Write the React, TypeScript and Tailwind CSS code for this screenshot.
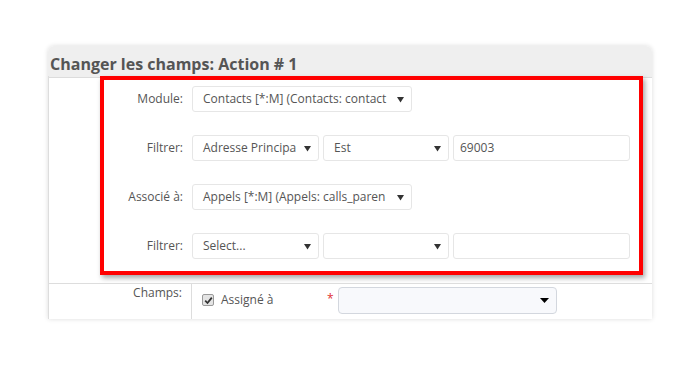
import React from "react";

const Caret = () => (
  <svg width="7" height="7" viewBox="0 0 7 7" className="shrink-0">
    <path d="M0 1 L7 1 L3.5 6.5 Z" fill="#333" />
  </svg>
);

function Sel({ w, text }: { w: string; text: string }) {
  return (
    <div className={`${w} h-[26px] border border-[#e6e6e6] rounded-[3px] bg-white flex items-center pl-[10px] pr-[7px]`}>
      <span className="whitespace-nowrap text-[12px] text-[#555]">{text}</span>
      <div className="flex-1" />
      <Caret />
    </div>
  );
}

function Label({ children }: { children: React.ReactNode }) {
  return (
    <div className="w-[79px] mr-[9px] text-right text-[12px] text-[#555] leading-[26px] shrink-0">{children}</div>
  );
}

export default function App() {
  return (
    <div className="w-[700px] h-[367px] bg-white pt-[46px] pl-[48px]" style={{ fontFamily: '"Open Sans", "Liberation Sans", sans-serif' }}>
      <div className="w-[604px] bg-white rounded-t-[6px] shadow-[0_0_5px_rgba(0,0,0,0.14)]">
        <div className="h-[32px] bg-[#efefef] rounded-t-[6px] border-b border-[#dcdcdc] pl-[2px] pt-[8px]">
          <div className="text-[16px] font-bold text-[#555] leading-[20px]">Changer les champs: Action # 1</div>
        </div>
        <div className="border-l border-[#dddddd]">
          <div className="ml-[51px] mr-[9px] -mt-[2px] border-[4px] border-[#ff0000] bg-white shadow-[2px_3px_5px_rgba(0,0,0,0.35)] pt-[6px] pb-[12px] flex flex-col gap-[23px]">
            <div className="flex items-center">
              <Label>Module:</Label>
              <Sel w="w-[220px]" text="Contacts [*:M] (Contacts: contact" />
            </div>
            <div className="flex items-center">
              <Label>Filtrer:</Label>
              <div className="flex gap-[4px]">
                <Sel w="w-[127px]" text="Adresse Principa" />
                <Sel w="w-[126px]" text="Est" />
                <div className="w-[177px] h-[26px] border border-[#e6e6e6] rounded-[3px] bg-white flex items-center pl-[6px] text-[12px] text-[#555]">69003</div>
              </div>
            </div>
            <div className="flex items-center">
              <Label>Associé à:</Label>
              <Sel w="w-[220px]" text="Appels [*:M] (Appels: calls_paren" />
            </div>
            <div className="flex items-center">
              <Label>Filtrer:</Label>
              <div className="flex gap-[4px]">
                <Sel w="w-[127px]" text="Select..." />
                <Sel w="w-[126px]" text="" />
                <div className="w-[177px] h-[26px] border border-[#e6e6e6] rounded-[3px] bg-white" />
              </div>
            </div>
          </div>
          <div className="mt-[8px] border-t border-[#dddddd] flex h-[36px]">
            <div className="w-[143px] border-r border-[#dddddd] text-right pr-[9px] text-[12px] text-[#555] leading-[16px] pt-[1px]">Champs:</div>
            <div className="flex items-start pt-[3px]">
              <div className="ml-[10px] mt-[7px] w-[12px] h-[12px] rounded-[2px] bg-[#e4e4e4] border border-[#9a9a9a] flex items-center justify-center">
                <svg width="9" height="9" viewBox="0 0 9 9"><path d="M1.2 4.6 L3.5 7 L7.8 1.6" stroke="#333" strokeWidth="1.8" fill="none" /></svg>
              </div>
              <div className="ml-[7px] mt-[4px] text-[12px] text-[#555] leading-[18px] w-[106px]">Assigné à</div>
              <div className="mt-[5px] text-[12px] text-[#e03030] leading-[14px] w-[11px]">*</div>
              <div className="w-[219px] h-[27px] border border-[#d3d7de] rounded-[4px] bg-[#f8f9fc] flex items-center justify-end pr-[7px]">
                <svg width="9" height="5" viewBox="0 0 9 5"><path d="M0 0 L9 0 L4.5 5 Z" fill="#000" /></svg>
              </div>
            </div>
          </div>
        </div>
      </div>
    </div>
  );
}
